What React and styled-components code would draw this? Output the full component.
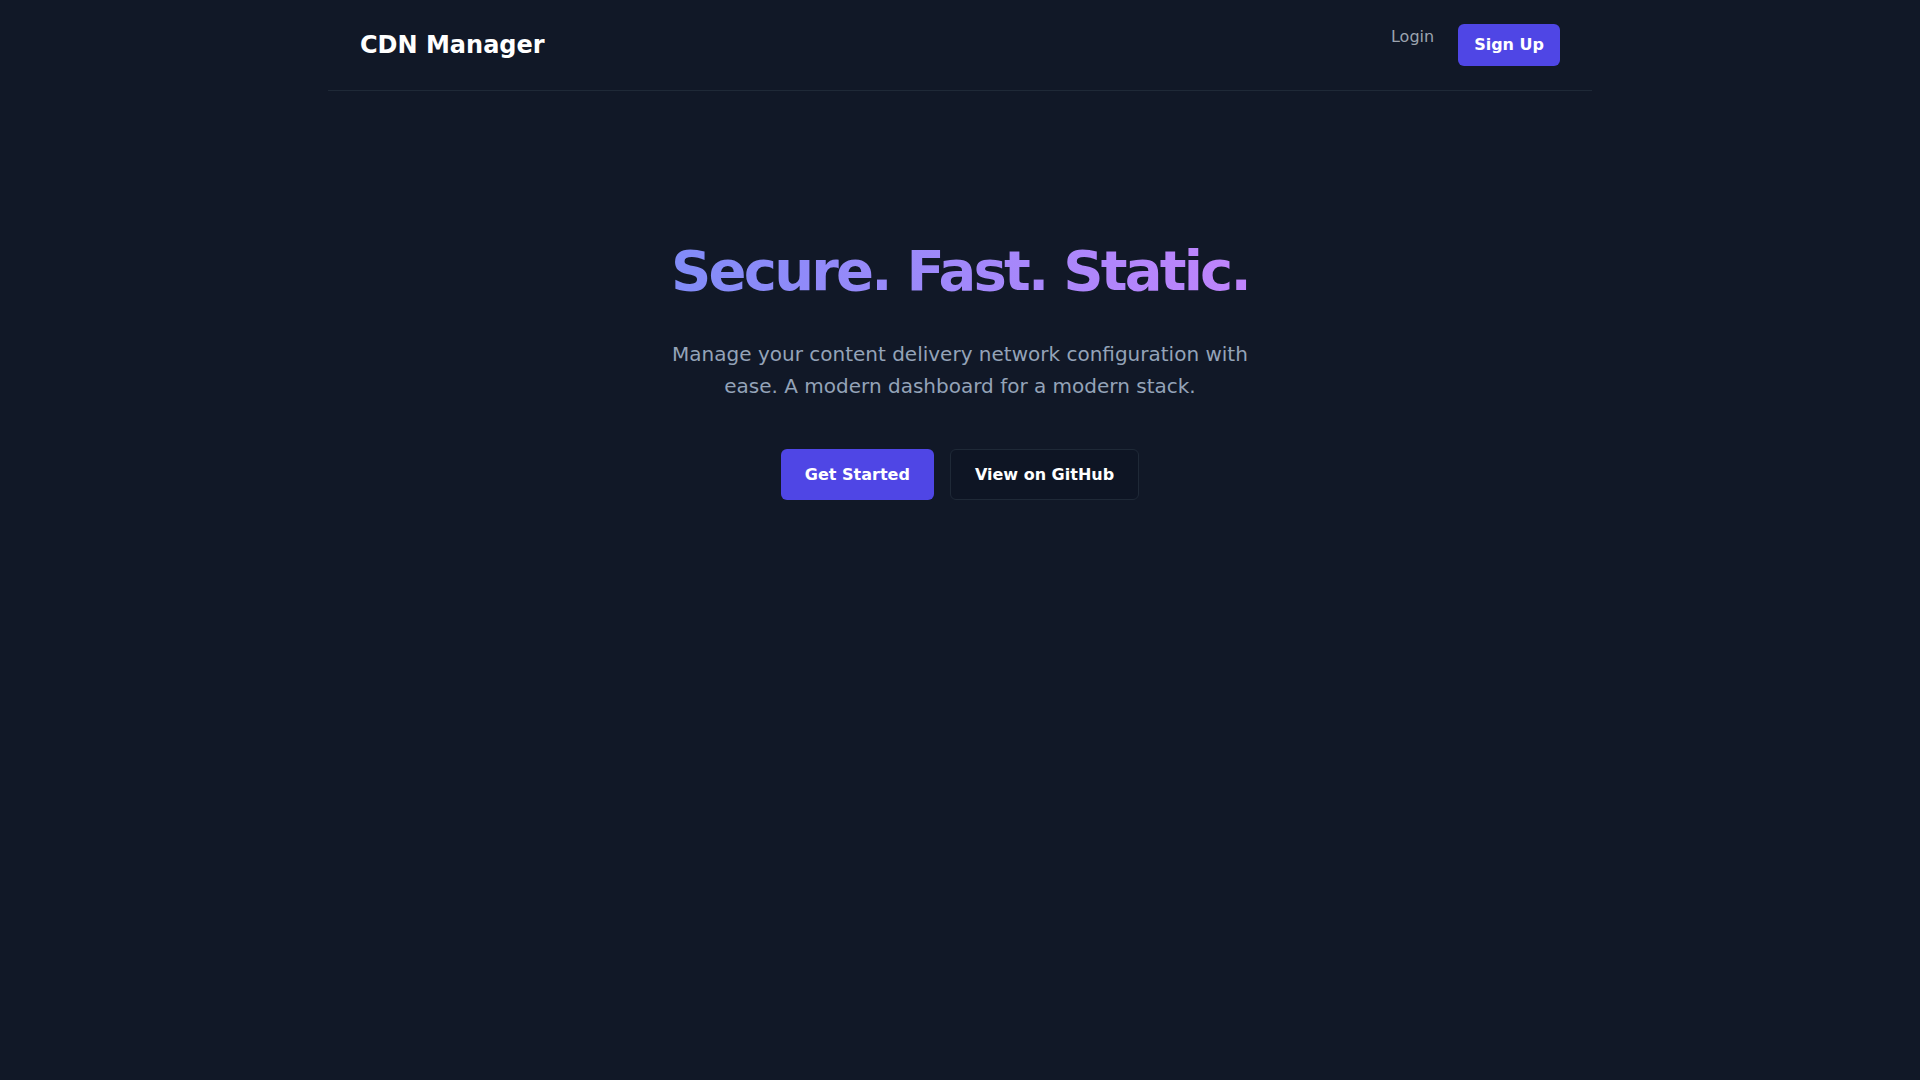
import React from 'react';
import styled, { createGlobalStyle } from 'styled-components';

const GlobalStyle = createGlobalStyle`
  html, body {
    margin: 0;
    padding: 0;
    background-color: #111827;
    font-family: 'DejaVu Sans', 'Noto Sans', sans-serif;
  }
  * {
    box-sizing: border-box;
  }
`;

const Page = styled.div`
  min-height: 100vh;
  background-color: #111827;
  color: #fff;
`;

const Container = styled.div`
  width: 1264px;
  margin: 0 auto;
`;

const Header = styled.header`
  display: flex;
  align-items: center;
  justify-content: space-between;
  padding: 24px 32px;
  border-bottom: 1px solid #1f2937;
`;

const Logo = styled.div`
  font-size: 24px;
  line-height: 32px;
  font-weight: 700;
  color: #fff;
`;

const Nav = styled.nav`
  display: flex;
  gap: 24px;
`;

const NavLink = styled.a`
  padding-top: 1px;
  font-size: 16px;
  line-height: 24px;
  color: #9ca3af;
  text-decoration: none;
  cursor: pointer;
`;

const SmallButton = styled.button`
  font-family: inherit;
  font-size: 16px;
  font-weight: 700;
  line-height: 24px;
  padding: 9px 16px;
  border: none;
  border-radius: 6px;
  background-color: #4f46e5;
  color: #fff;
  cursor: pointer;
`;

const Hero = styled.section`
  display: flex;
  flex-direction: column;
  align-items: center;
  text-align: center;
  padding-top: 149px;
`;

const Title = styled.h1`
  margin: 0;
  font-size: 56px;
  line-height: 1.1;
  font-weight: 700;
  letter-spacing: -0.05em;
  background: linear-gradient(90deg, #818cf8, #c084fc);
  -webkit-background-clip: text;
  background-clip: text;
  color: transparent;
`;

const Lead = styled.p`
  margin: 36px 0 0;
  max-width: 580px;
  font-size: 20px;
  line-height: 32px;
  color: #94a3b8;
`;

const Actions = styled.div`
  display: flex;
  gap: 16px;
  margin-top: 47px;
`;

const Button = styled.button`
  font-family: inherit;
  font-size: 16px;
  font-weight: 700;
  line-height: 25px;
  padding: ${p => (p.$primary ? '13px 24px' : '12px 24px')};
  border-radius: 6px;
  cursor: pointer;
  color: #fff;
  border: ${p => (p.$primary ? 'none' : '1px solid #1f2937')};
  background-color: ${p => (p.$primary ? '#4f46e5' : '#0e1524')};
`;

const App = () => {
  return (
    <Page>
      <GlobalStyle />
      <Container>
        <Header>
          <Logo>CDN Manager</Logo>
          <Nav>
            <NavLink>Login</NavLink>
            <SmallButton>Sign Up</SmallButton>
          </Nav>
        </Header>
        <Hero>
          <Title>Secure. Fast. Static.</Title>
          <Lead>
            Manage your content delivery network configuration with ease. A
            modern dashboard for a modern stack.
          </Lead>
          <Actions>
            <Button $primary>Get Started</Button>
            <Button>View on GitHub</Button>
          </Actions>
        </Hero>
      </Container>
    </Page>
  );
};

export default App;
